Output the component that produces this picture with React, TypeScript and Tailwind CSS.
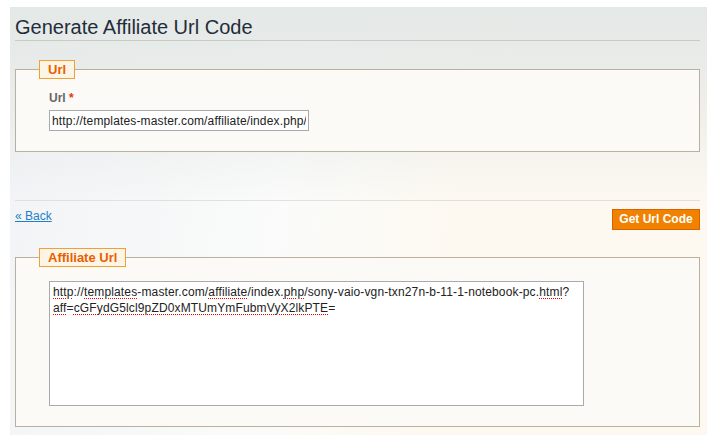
const url1 = "http://templates-master.com/affiliate/index.php/";

const Spell = ({ children }: { children: React.ReactNode }) => (
  <span className="underline decoration-dotted decoration-[#ff0000] decoration-[1px] underline-offset-[2px]">
    {children}
  </span>
);

const Legend = ({ title }: { title: string }) => (
  <legend className="ml-[23px] px-[8px] h-[19px] leading-[17px] border border-[#f3a033] bg-[#fcf5e6] text-[13px] font-bold text-[#eb5e00]">
    {title}
  </legend>
);

const App = () => {
  return (
    <div className="min-h-[435px] bg-white pt-[7px] pl-[10px] font-['Liberation_Sans',Arial,sans-serif]">
      <div className="min-h-[428px] pl-[5px] pr-[7px] pb-[8px] bg-[linear-gradient(to_bottom,#e4e8e6_0px,rgba(228,232,230,0.6)_100px,rgba(228,232,230,0)_195px),linear-gradient(100deg,#f1f3f6_0%,#fafbfa_40%,#fdf9f1_62%,#fdf9f1_100%)]">
        <div className="pt-[8px] pb-[1px] border-b border-[#c9cac6]">
          <h3 className="text-[20px] leading-[24px] text-[#1f2d3a]">Generate Affiliate Url Code</h3>
        </div>

        <fieldset className="mt-[19px] border border-[#bbafa0] bg-[#fbfaf6]">
          <Legend title="Url" />
          <div className="pl-[33px] pt-[12px] pb-[20px]">
            <label className="block text-[12px] leading-[15px] font-bold text-[#666]">
              Url <span className="text-[#eb340a]">*</span>
            </label>
            <input
              readOnly
              value={url1}
              className="mt-[4px] block w-[260px] h-[21px] border border-[#aaa] bg-white px-[2px] text-[12px] tracking-[0.15px] text-[#222] outline-none"
            />
          </div>
        </fieldset>

        <div className="mt-[48px] border-t border-[#e2e0dc] pt-[8px] flex justify-between items-start">
          <a href="#" className="text-[12px] leading-[15px] text-[#1e7ec8] underline">
            « Back
          </a>
          <button className="w-[88px] h-[21px] border border-[#de6100] bg-[#f18200] text-white text-[12px] font-bold leading-[19px]">
            Get Url Code
          </button>
        </div>

        <fieldset className="mt-[18px] border border-[#bbafa0] bg-[#fbfaf6]">
          <Legend title="Affiliate Url" />
          <div className="pl-[33px] pt-[14px] pb-[20px]">
            <div className="w-[535px] h-[125px] border border-[#aaa] bg-white pl-[3px] pt-[2px] text-[12px] leading-[16px] tracking-[0.14px] text-[#222]">
              <div>
                <Spell>http</Spell>://<Spell>templates</Spell>-master.com/<Spell>affiliate</Spell>/index.<Spell>php</Spell>/sony-vaio-vgn-txn27n-b-11-1-notebook-pc.<Spell>html</Spell>?
              </div>
              <div>
                <Spell>aff</Spell>=<Spell>cGFydG5lcl9pZD0xMTUmYmFubmVyX2lkPTE</Spell>=
              </div>
            </div>
          </div>
        </fieldset>
      </div>
    </div>
  );
};

export default App;
